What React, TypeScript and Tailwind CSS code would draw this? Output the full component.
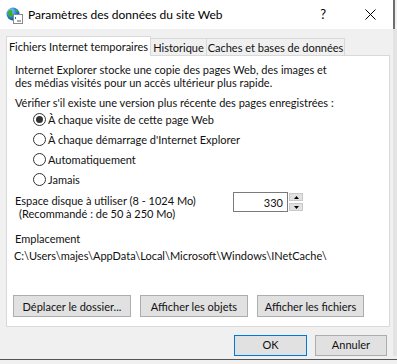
import { ReactNode } from "react"

const IeIcon = () => (
  <svg width="17" height="17" viewBox="0 0 17 17">
    <defs>
      <radialGradient id="globe" cx="35%" cy="30%" r="75%">
        <stop offset="0%" stopColor="#8fd3ff" />
        <stop offset="60%" stopColor="#1f7ad6" />
        <stop offset="100%" stopColor="#0b4c9c" />
      </radialGradient>
    </defs>
    <circle cx="7" cy="7" r="6.5" fill="url(#globe)" />
    <path d="M2 5 C3 3 5 2.5 6 3.5 C7 4.5 5.5 6 6.5 7 C7.5 8 6 10 4.5 10.5 C3 9.5 2 8 2 5 Z" fill="#3fae2a" />
    <path d="M8.5 2 C10 2 12 3.5 12.5 5 C11 5.5 9.5 4.5 8.5 2 Z" fill="#3fae2a" />
    <rect x="7.5" y="7.5" width="9" height="9" fill="#ffffff" stroke="#8a8a8a" />
    <path d="M9 10 L10 11 L9 12" stroke="#2b6cc4" fill="none" strokeWidth="1" />
    <path d="M11 14 H15" stroke="#555" strokeWidth="1" />
  </svg>
)

const Radio = ({ checked, children }: { checked?: boolean; children: ReactNode }) => (
  <div className="flex items-center h-[20px]">
    <div className="w-[13px] h-[13px] rounded-full border border-[#333] bg-white flex items-center justify-center">
      {checked && <div className="w-[7px] h-[7px] rounded-full bg-[#333]" />}
    </div>
    <span className="ml-[2px]">{children}</span>
  </div>
)

const Button = ({ children, className, focused }: { children: ReactNode; className: string; focused?: boolean }) => (
  <div
    className={
      "flex items-center justify-center bg-[#e1e1e1] border " +
      (focused ? "border-[#0078d7] " : "border-[#adadad] ") +
      className
    }
  >
    {children}
  </div>
)

export default function App() {
  return (
    <div
      className="relative w-[397px] h-[364px] overflow-hidden bg-[#f0f0f0] text-[11px] text-[#111] whitespace-nowrap"
      style={{ fontFamily: 'Lato, "Liberation Sans", sans-serif' }}
    >
      <div className="flex w-[397px]">
        {/* DIALOG */}
        <div className="w-[393px]">
          {/* TITLE BAR */}
          <div className="h-[29px] bg-white flex items-center">
            <div className="ml-[6px] mt-[1px]">
              <IeIcon />
            </div>
            <span className="ml-[5px] text-[12px] text-black">Paramètres des données du site Web</span>
            <span className="ml-auto text-[13px] text-black">?</span>
            <svg className="ml-[39px] mr-[17px]" width="11" height="11" viewBox="0 0 11 11">
              <path d="M0.5 0.5 L10.5 10.5 M10.5 0.5 L0.5 10.5" stroke="#000" strokeWidth="1" />
            </svg>
          </div>

          {/* TABS */}
          <div className="px-[6px] pt-[7px]">
            <div className="flex items-end h-[19px]">
              <div className="relative z-10 -mb-px h-[20px] w-[145px] bg-white border border-b-0 border-[#d9d9d9] flex items-center justify-center leading-none">
                Fichiers Internet temporaires
              </div>
              <div className="h-[17px] w-[56px] bg-[#f0f0f0] border border-l-0 border-b-0 border-[#d9d9d9] flex items-center justify-center leading-none">
                Historique
              </div>
              <div className="h-[17px] w-[138px] bg-[#f0f0f0] border border-l-0 border-b-0 border-[#d9d9d9] flex items-center justify-center leading-none">
                Caches et bases de données
              </div>
            </div>

            {/* PANEL */}
            <div className="w-[384px] h-[272px] bg-white border border-[#d9d9d9] leading-[13px]">
              <div className="pl-[8px] pt-[7px]">
                <p>Internet Explorer stocke une copie des pages Web, des images et</p>
                <p>des médias visités pour un accès ultérieur plus rapide.</p>
                <p className="mt-[7px]">Vérifier s'il existe une version plus récente des pages enregistrées :</p>
                <div className="pl-[18px]">
                  <Radio checked>À chaque visite de cette page Web</Radio>
                  <Radio>À chaque démarrage d'Internet Explorer</Radio>
                  <Radio>Automatiquement</Radio>
                  <Radio>Jamais</Radio>
                </div>
                <div className="flex mt-[4px]">
                  <div className="pt-[1px]">
                    <p>Espace disque à utiliser (8 - 1024 Mo)</p>
                    <p className="pl-[4px]">(Recommandé : de 50 à 250 Mo)</p>
                  </div>
                  <div className="ml-auto mr-[86px] -mt-[1px] flex h-[20px]">
                    <div className="w-[55px] h-[20px] border border-[#7a7a7a] flex items-center justify-end pr-[4px]">
                      330
                    </div>
                    <div className="w-[15px] h-[20px] flex flex-col justify-between py-[1px] pl-[1px]">
                      <div className="h-[8px] bg-[#e1e1e1] border border-[#c9c9c9] flex items-center justify-center">
                        <svg width="5" height="3" viewBox="0 0 5 3"><path d="M0 3 L2.5 0 L5 3 Z" fill="#000" /></svg>
                      </div>
                      <div className="h-[8px] bg-[#e1e1e1] border border-[#c9c9c9] flex items-center justify-center">
                        <svg width="5" height="3" viewBox="0 0 5 3"><path d="M0 0 L2.5 3 L5 0 Z" fill="#000" /></svg>
                      </div>
                    </div>
                  </div>
                </div>
                <p className="mt-[12px]">Emplacement</p>
                <p className="mt-[4px] -ml-[1px]">C:\Users\majes\AppData\Local\Microsoft\Windows\INetCache\</p>
              </div>
              <div className="flex pl-[6px] mt-[33px] gap-[9px] h-[22px]">
                <Button className="w-[118px] h-[22px]">Déplacer le dossier...</Button>
                <Button className="w-[108px] h-[22px]">Afficher les objets</Button>
                <Button className="w-[107px] h-[22px]">Afficher les fichiers</Button>
              </div>
            </div>

            {/* FOOTER */}
            <div className="flex gap-[8px] pl-[228px] mt-[8px]">
              <Button focused className="w-[75px] h-[21px]">OK</Button>
              <Button className="w-[74px] h-[21px]">Annuler</Button>
            </div>
          </div>
        </div>

        {/* RIGHT EDGE (window behind) */}
        <div className="w-[4px] flex flex-col">
          <div className="h-[29px] w-[2px] bg-[#6e6e6e]" />
          <div className="flex-1 bg-[#e3e3e3]" />
        </div>
      </div>

      {/* BOTTOM EDGE (window behind) */}
      <div className="absolute left-0 right-0 top-[359px] h-[5px] border-t border-[#555] bg-[#f0f0f0]" />
    </div>
  )
}
